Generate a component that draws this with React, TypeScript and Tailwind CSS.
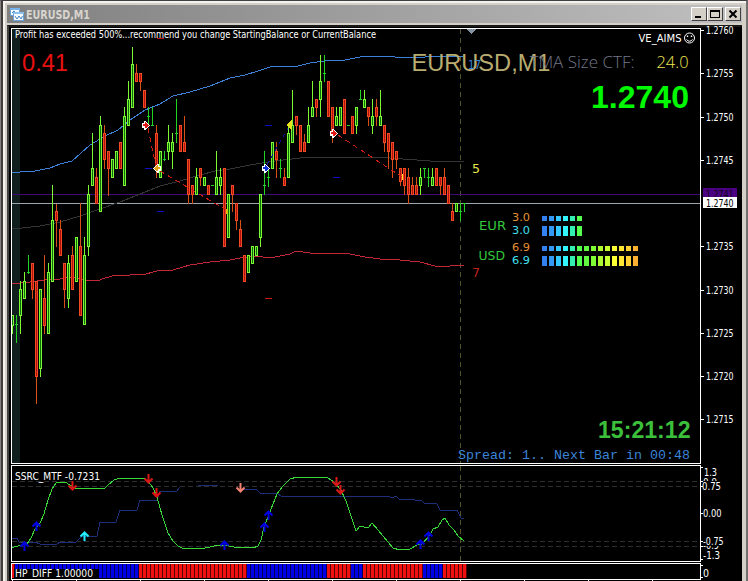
import React from 'react';

type Kind = 'g' | 'r' | 'd';
// kind, high, body top, body bottom, low. Dojis use body top as the tick level.
type Candle = [Kind, number, number, number, number];

const STEP = 4;
const FIRST_X = 12;

const CANDLES: Candle[] = [
  ['g', 315, 315, 325, 333], ['d', 315, 324, 324, 342], ['g', 281, 289, 315, 333], ['g', 272, 281, 298, 298],
  ['d', 255, 272, 272, 273], ['r', 263, 263, 289, 298], ['r', 281, 281, 376, 403], ['g', 289, 289, 368, 376],
  ['r', 255, 298, 325, 333], ['g', 263, 272, 333, 333], ['g', 185, 220, 281, 281], ['r', 204, 211, 220, 246],
  ['r', 220, 229, 255, 255], ['r', 263, 263, 289, 307], ['g', 255, 263, 298, 307], ['r', 246, 255, 289, 289],
  ['g', 237, 237, 281, 281], ['r', 203, 246, 315, 315], ['g', 237, 255, 324, 324], ['g', 185, 194, 246, 255],
  ['g', 133, 168, 185, 185], ['r', 168, 177, 203, 203], ['g', 116, 125, 211, 211], ['r', 125, 133, 159, 168],
  ['r', 151, 151, 168, 195], ['g', 159, 159, 177, 177], ['g', 151, 151, 168, 168], ['r', 142, 142, 168, 168],
  ['g', 107, 116, 185, 185], ['g', 81, 99, 125, 125], ['g', 47, 64, 107, 107], ['r', 64, 73, 81, 81],
  ['r', 73, 73, 81, 90], ['r', 90, 90, 107, 107], ['d', 107, 116, 116, 125], ['d', 107, 125, 125, 125],
  ['r', 125, 133, 168, 177], ['g', 151, 151, 177, 177], ['d', 151, 159, 159, 160], ['g', 125, 142, 151, 159],
  ['g', 133, 142, 151, 168], ['d', 99, 133, 133, 142], ['r', 125, 125, 151, 151], ['r', 116, 142, 151, 151],
  ['r', 159, 159, 194, 203], ['r', 185, 185, 194, 203], ['g', 168, 177, 194, 194], ['r', 168, 168, 177, 185],
  ['g', 177, 177, 185, 185], ['r', 185, 185, 194, 194], ['d', 185, 185, 185, 185], ['g', 151, 177, 194, 194],
  ['g', 168, 177, 185, 194], ['r', 168, 168, 246, 246], ['g', 194, 194, 237, 237], ['r', 185, 185, 194, 211],
  ['r', 203, 203, 220, 229], ['r', 220, 229, 246, 246], ['r', 255, 255, 281, 281], ['g', 255, 255, 272, 272],
  ['g', 246, 246, 263, 263], ['g', 246, 246, 255, 255], ['g', 194, 194, 237, 246], ['d', 151, 185, 185, 194],
  ['d', 168, 177, 177, 186], ['g', 142, 142, 168, 168], ['r', 142, 151, 159, 177], ['d', 159, 168, 168, 177],
  ['r', 168, 177, 185, 185], ['g', 125, 133, 177, 177], ['g', 90, 125, 142, 142], ['r', 116, 116, 125, 134],
  ['r', 125, 125, 151, 151], ['r', 134, 142, 151, 151], ['g', 107, 125, 142, 142], ['g', 81, 107, 116, 116],
  ['r', 99, 99, 107, 116], ['g', 55, 81, 99, 116], ['d', 55, 73, 73, 81], ['r', 81, 81, 116, 116],
  ['r', 107, 107, 133, 142], ['g', 107, 116, 125, 125], ['g', 107, 107, 125, 125], ['r', 99, 99, 133, 133],
  ['d', 125, 125, 125, 125], ['r', 116, 116, 133, 133], ['g', 107, 107, 125, 133], ['d', 90, 99, 99, 99],
  ['g', 90, 99, 107, 107], ['r', 107, 107, 116, 125], ['g', 99, 116, 125, 133], ['r', 99, 107, 116, 125],
  ['g', 90, 116, 125, 125], ['r', 125, 125, 142, 151], ['r', 133, 133, 151, 168], ['r', 142, 142, 159, 177],
  ['r', 151, 151, 159, 168], ['r', 168, 168, 181, 185], ['r', 168, 168, 185, 194], ['r', 168, 177, 194, 203],
  ['r', 177, 185, 194, 194], ['r', 177, 185, 194, 194], ['g', 168, 177, 185, 194], ['d', 168, 168, 168, 177],
  ['d', 168, 177, 177, 186], ['g', 168, 177, 185, 185], ['r', 168, 168, 185, 185], ['r', 177, 177, 185, 194],
  ['r', 168, 177, 194, 194], ['r', 185, 185, 203, 203], ['r', 203, 211, 220, 220], ['g', 203, 203, 211, 211],
  ['d', 203, 211, 211, 220], ['d', 203, 203, 203, 211],
];

const UPPER_BAND =
  '12,173 20,172 35,171 50,168 60,164 72,161 90,145 105,136 118,130 130,120 145,110 160,104 173,96 190,92 210,86 225,80 230,78 245,75 258,71 270,67 298,66 310,63 325,61 345,60 360,57 375,56 395,57 425,57 435,56 455,56 464,57';
const MIDDLE_BAND =
  '12,229 22,228 40,226 60,222 80,216 100,209 120,202 140,194 160,186 180,181 200,175 215,171 230,169 250,165 275,161 300,158 330,157 360,157 390,158 430,161 464,161';
const LOWER_BAND =
  '12,284 30,282 45,280 60,279 72,277 85,280 97,281 105,278 116,275 125,276 135,274 142,275 157,271 173,270 190,265 210,262 230,260 240,258 255,256 270,258 280,256 290,254 296,251 310,253 320,253 335,254 345,253 365,257 380,259 400,260 420,262 435,266 450,266 464,265';

const SSRC_FAST =
  '12,547 14,547 22,545 27,544 31,538 35,529 40,523 44,514 48,500 52,489 56,483 60,482 65,482 70,485 75,488 80,489 85,488 105,488 108,485 114,480 120,478 143,478 148,481 153,488 157,497 162,515 168,533 173,541 178,546 182,548 205,548 210,547 218,545 224,545 234,547 250,547 253,548 258,546 261,540 264,527 268,517 273,504 277,494 282,487 290,479 297,477 328,478 334,482 341,490 346,501 350,513 356,531 360,526 368,528 372,523 378,530 388,542 393,548 400,550 410,549 417,545 422,544 430,535 433,529 438,527 442,520 445,518 449,525 454,530 458,536 464,541';
const SSRC_SLOW = [
  '12,538 17,538 19,542 35,542 40,544 57,544 60,542 76,542 82,536 97,536 100,522 116,522 120,510 137,510 140,500 157,500 160,491 177,491 180,487',
  '198,485 218,485',
  '240,489 256,489 260,493 277,493 281,496 388,496 392,498 396,496 400,500 408,499 422,501 424,503 437,504 440,510 457,510 461,518 464,518',
];

const ARROWS: [number, number, string, boolean][] = [
  [24, 546, '#0000e0', true],
  [36, 526, '#0000e0', true],
  [84, 536, '#20f0ff', true],
  [224, 545, '#0000e0', true],
  [264, 527, '#0000e0', true],
  [268, 515, '#0000e0', true],
  [420, 544, '#0000e0', true],
  [428, 536, '#0000e0', true],
  [72, 486, '#d81818', false],
  [148, 479, '#d81818', false],
  [156, 493, '#e01010', false],
  [240, 488, '#f08070', false],
  [336, 482, '#d81818', false],
  [340, 490, '#d81818', false],
];

const METER = [
  '#3380f0', '#3399f5', '#33c8ff', '#33f5ff', '#33f0b0', '#55ff50', '#60f840',
  '#80ff33', '#acf833', '#c8ff33', '#ffff33', '#ffe633', '#ffd033', '#ffb033',
];

const PRICES = ['1.2760', '1.2755', '1.2750', '1.2745', '', '1.2735', '1.2730', '1.2725', '1.2720', '1.2715'];

const histColor = (x: number) => {
  const red =
    x < 14 || (x > 138 && x < 246) || (x > 326 && x < 350) || (x > 362 && x < 422) || x > 442;
  return red ? '#f01010' : '#0000e8';
};

const TAHOMA = "'DejaVu Sans Condensed', 'DejaVu Sans', sans-serif";
const LIGHT = "'Open Sans', 'Noto Sans', sans-serif";
const VERDANA = "'DejaVu Sans', sans-serif";
const ARIAL = "'Liberation Sans', Arial, sans-serif";

interface LabelProps {
  x: number;
  y: number;
  w: number;
  size?: number;
  fill?: string;
  font?: string;
  weight?: number;
  children: string;
}

const Label = ({ x, y, w, size = 11, fill = '#fff', font = TAHOMA, weight = 400, children }: LabelProps) => (
  <text
    x={x}
    y={y}
    textLength={w}
    lengthAdjust="spacingAndGlyphs"
    fontSize={size}
    fontFamily={font}
    fontWeight={weight}
    fill={fill}
  >
    {children}
  </text>
);

const CandleBar = ({ x, c }: { x: number; c: Candle }) => {
  const [kind, high, top, bottom, low] = c;
  if (kind === 'd') {
    return (
      <g fill="#22d422">
        <rect x={x} y={high} width={1} height={Math.max(1, low - high + 1)} />
        <rect x={x - 1} y={top} width={3} height={1} />
      </g>
    );
  }
  const edge = kind === 'g' ? '#7cf932' : '#f44a20';
  return (
    <g>
      <rect x={x} y={high} width={1} height={low - high + 1} fill={kind === 'g' ? '#7cf932' : '#d85018'} />
      <rect x={x - 1} y={top} width={3} height={bottom - top + 1} fill={edge} />
      <rect x={x} y={top + 1} width={1} height={bottom - top - 1} fill={kind === 'g' ? '#0a6c0a' : '#b01010'} />
    </g>
  );
};

// Order marker: a diamond whose flat side faces the bar it was opened on
const Marker = ({ x, y, fill, flip = false }: { x: number; y: number; fill: string; flip?: boolean }) => (
  <g transform={`translate(${x} ${y}) scale(${flip ? -1 : 1} 1)`}>
    <path
      d="M-4 -2h2v-2h2v1h1v1h1v1h1v1h1v1h-1v1h-1v1h-1v1h-1v1h-2v-2h-2z"
      fill="#fff"
    />
    <path d="M-3 -1h2v-2h1v1h1v1h1v1h1v1h-1v1h-1v1h-2v-2h-2z" fill={fill} />
  </g>
);

const Meter = ({ x, y, h, n }: { x: number; y: number; h: number; n: number }) => (
  <g>
    {METER.slice(0, n).map((color, i) => (
      <rect key={i} x={x + i * 7} y={y} width={5} height={h} fill={color} />
    ))}
  </g>
);

const MainPlot = () => (
  <svg className="block shrink-0" width={688} height={434} viewBox="12 29 688 434">
    <g shapeRendering="crispEdges">
      <rect x={12} y={29} width={8} height={434} fill="#101e1e" />
      <line x1={460.5} y1={29} x2={460.5} y2={463} stroke="#55552a" strokeDasharray="5 4" />
      <rect x={12} y={194} width={688} height={1} fill="#3f0a74" />
      <rect x={12} y={203} width={688} height={1} fill="#9ca4ae" />
      <g fill="none" strokeWidth={1}>
        <polyline points={MIDDLE_BAND} stroke="#343434" />
        <polyline points={UPPER_BAND} stroke="#3c80d8" />
        <polyline points={LOWER_BAND} stroke="#c02838" />
      </g>
      {CANDLES.map((c, i) => (
        <CandleBar key={i} x={FIRST_X + i * STEP} c={c} />
      ))}
      <g fill="#1010c8">
        <rect x={145} y={168} width={7} height={1} />
        <rect x={157} y={211} width={7} height={1} />
        <rect x={265} y={125} width={7} height={1} />
        <rect x={333} y={177} width={7} height={1} />
      </g>
      <rect x={157} y={38} width={7} height={1} fill="#b01414" />
      <rect x={265} y={298} width={7} height={1} fill="#d01818" />
      <g fill="none" stroke="#d01c10" strokeDasharray="5 4">
        <path d="M148 128L156 167" />
        <path d="M160 171L228 211" />
        <path d="M338 135L402 177" />
      </g>
      <path d="M267 165L288 128" stroke="#0c0ca0" strokeDasharray="4 4" />
      <path d="M286.5 125L292 120V130z" fill="#e8e020" />
      <path d="M402 174h1v6h-1z" fill="#ffe030" />
      <path d="M226 209h2v5h-2z" fill="#d8c010" />
      <path d="M467 29h9v1h-1v1h-1v1h-1v1h-1v1h-1v-1h-1v-1h-1v-1h-1v-1h-1z" fill="#8492a0" />
      <Marker x={146} y={125} fill="#e01818" />
      <Marker x={157} y={168} fill="#e0a018" flip />
      <Marker x={266} y={168} fill="#1030e0" />
      <Marker x={334} y={133} fill="#e01818" />
    </g>

    <Label x={15} y={38} w={361}>
      Profit has exceeded 500%...recommend you change StartingBalance or CurrentBalance
    </Label>
    <Label x={22} y={71} w={46} size={24} fill="#e81010" font={ARIAL}>0.41</Label>
    <Label x={638.5} y={41.5} w={43}>VE_AIMS</Label>
    <g fill="none" stroke="#fff" strokeWidth={1}>
      <circle cx={689.5} cy={38} r={5} />
      <path d="M686.5 39.5q3 3.5 6 0" />
      <path d="M687.5 35.5v1.5M691.5 35.5v1.5" strokeWidth={1.4} />
    </g>

    <Label x={411.5} y={71} w={139} size={24} fill="#b8ac70" font={ARIAL}>EURUSD,M1</Label>
    <Label x={468} y={69} w={13} size={13} fill="#3c84d8" font={VERDANA}>17</Label>
    <Label x={529.5} y={68} w={105} size={16} fill="#727688" font={LIGHT} weight={300}>TMA Size CTF:</Label>
    <Label x={656.5} y={68} w={32} size={16} fill="#f0e850" font={LIGHT} weight={300}>24.0</Label>
    <Label x={591} y={108} w={98} size={32} fill="#00f800" font={ARIAL} weight={700}>1.2740</Label>

    <Label x={472} y={173} w={8} size={13} fill="#e8e848" font={VERDANA}>5</Label>
    <Label x={472} y={277} w={8} size={13} fill="#c02018" font={VERDANA}>7</Label>

    <Label x={479} y={230} w={27} size={12.5} fill="#34c83c" font={VERDANA}>EUR</Label>
    <Label x={478.5} y={260} w={26.5} size={12.5} fill="#34c83c" font={VERDANA}>USD</Label>
    <Label x={512} y={221} w={18} size={11} fill="#e89030" font={VERDANA}>3.0</Label>
    <Label x={512} y={234} w={18} size={11} fill="#40e0f0" font={VERDANA}>3.0</Label>
    <Label x={512} y={251} w={18} size={11} fill="#e89030" font={VERDANA}>6.9</Label>
    <Label x={512} y={264} w={18} size={11} fill="#40e0f0" font={VERDANA}>6.9</Label>
    <Meter x={542} y={216} h={5} n={6} />
    <Meter x={542} y={226} h={10} n={6} />
    <Meter x={542} y={246} h={5} n={14} />
    <Meter x={542} y={256} h={10} n={14} />

    <Label x={598} y={438} w={92.5} size={24} fill="#3cc03c" font={ARIAL} weight={700}>15:21:12</Label>
    <Label x={458} y={459} w={232} size={13.33} fill="#3c84d8" font="'Liberation Mono', monospace">
      Spread: 1.. Next Bar in 00:48
    </Label>
  </svg>
);

const PriceAxis = () => (
  <svg className="block shrink-0 overflow-visible" width={40} height={436} viewBox="701 28 40 436">
    {PRICES.map((price, i) => {
      if (!price) return null;
      const y = Math.round(30 + i * 43.25);
      return (
        <g key={price}>
          <rect x={701} y={y} width={3} height={1} fill="#fff" />
          <Label x={706} y={y + 4} w={27.5}>{price}</Label>
        </g>
      );
    })}
    <rect x={703} y={188} width={34} height={10} fill="#4b0082" />
    <Label x={706} y={198} w={27.5} fill="#100018">1.2741</Label>
    <rect x={703} y={197} width={34} height={11} fill="#fff" />
    <Label x={706} y={207} w={27.5} fill="#000">1.2740</Label>
  </svg>
);

const SsrcPlot = () => (
  <svg className="block shrink-0" width={688} height={95} viewBox="12 466 688 95">
    <g shapeRendering="crispEdges" fill="none">
      {[481, 486, 541, 546].map((y) => (
        <path key={y} d={`M12 ${y}.5H700`} stroke="#2e2e2e" strokeDasharray="5 3" />
      ))}
      <path d="M460.5 466V561" stroke="#55552a" strokeDasharray="5 4" />
      {SSRC_SLOW.map((points) => (
        <polyline key={points} points={points} stroke="#1c2f78" />
      ))}
      <polyline points={SSRC_FAST} stroke="#38d838" />
    </g>
    {ARROWS.map(([x, y, color, up]) => (
      <path
        key={`${x}-${y}`}
        transform={`translate(${x + 0.5} ${y}) scale(1 ${up ? 1 : -1})`}
        d="M0 5V-4M-4 0.5L0-3.5L4 0.5"
        fill="none"
        stroke={color}
        strokeWidth={2}
      />
    ))}
    <Label x={15} y={479.5} w={85}>SSRC_MTF -0.7231</Label>
  </svg>
);

const SsrcAxis = () => (
  <svg className="block shrink-0" width={40} height={97} viewBox="701 465 40 97">
    {[467, 481, 486, 513, 541, 546, 559].map((y) => (
      <rect key={y} x={701} y={y} width={2} height={1} fill="#fff" />
    ))}
    <Label x={703} y={486} w={14}>0.9</Label>
    <rect x={703} y={467} width={30} height={10} fill="#000" />
    <Label x={704} y={476} w={13}>1.3</Label>
    <rect x={703} y={481} width={20} height={9} fill="#000" />
    <Label x={702} y={490} w={19}>0.75</Label>
    <Label x={703} y={517} w={18.5}>0.00</Label>
    <Label x={703} y={549} w={16}>-0.9</Label>
    <rect x={703} y={537} width={22} height={9} fill="#000" />
    <Label x={703} y={545} w={20.5}>-0.75</Label>
    <Label x={703} y={558.5} w={17}>-1.3</Label>
  </svg>
);

const HistPlot = () => (
  <svg className="block shrink-0" width={688} height={15} viewBox="12 564 688 15">
    <g shapeRendering="crispEdges">
      {CANDLES.map((_, i) => {
        const x = FIRST_X + i * STEP;
        return (
          <g key={i} fill={histColor(x)}>
            <rect x={x - 1} y={564} width={3} height={14} />
            <rect x={x + 2} y={564} width={1} height={14} opacity={0.35} />
          </g>
        );
      })}
      <rect x={14} y={569} width={85} height={9} fill="#000" />
    </g>
    <Label x={15} y={577} w={78}>HP_DIFF 1.00000</Label>
  </svg>
);

const HistAxis = () => (
  <svg className="block shrink-0" width={40} height={17} viewBox="701 563 40 17">
    <path d="M701 565.5h2M701 577.5h2" stroke="#fff" />
    <Label x={703} y={577} w={6}>0</Label>
  </svg>
);

const WindowButton = ({ children }: { children: React.ReactNode }) => (
  <button className="flex h-[14px] w-4 items-center justify-center border border-t-white border-l-white border-r-[#404040] border-b-[#404040] bg-[#d4d0c8]">
    <svg width={12} height={10} viewBox="0 0 12 10" shapeRendering="crispEdges" fill="none" stroke="#000">
      {children}
    </svg>
  </button>
);

const TitleBar = () => (
  <header className="flex h-[18px] shrink-0 items-center bg-gradient-to-r from-[#808080] to-[#c0c0c0] pr-px pl-[3px]">
    <svg width={14} height={13} viewBox="0 0 14 13" className="mr-[2px]">
      <rect x={0.5} y={0.5} width={9} height={7} fill="#f4faff" stroke="#68a0d8" />
      <rect x={0} y={0} width={10} height={2} fill="#78b4ec" />
      <path d="M2 5l2-2 2 3 2-2" fill="none" stroke="#4080c0" />
      <rect x={3.5} y={4.5} width={10} height={8} fill="#f8fcff" stroke="#68a0d8" />
      <rect x={3} y={4} width={11} height={2} fill="#88c0f0" />
      <path d="M5 8l2 3 2-3 2 3 1.5-3" fill="none" stroke="#4080c0" />
    </svg>
    <svg width={66} height={18} viewBox="0 0 66 18">
      <Label x={0} y={14} w={64} size={11.5} fill="#d8d5ce" weight={700}>EURUSD,M1</Label>
    </svg>
    <div className="ml-auto flex items-center">
      <WindowButton>
        <path d="M2 7.5h6M2 8.5h6" />
      </WindowButton>
      <WindowButton>
        <path d="M1.5 1.5h9v7h-9zM1 2.5h10" />
      </WindowButton>
      <div className="ml-[2px] flex">
        <WindowButton>
          <path d="M2.5 1.5l7 7M9.5 1.5l-7 7" strokeWidth={2} shapeRendering="auto" />
        </WindowButton>
      </div>
    </div>
  </header>
);

export default function App() {
  return (
    <div className="flex h-[581px] w-[748px] overflow-hidden border-t border-r-2 border-l border-t-[#404040] border-r-[#707070] border-l-[#808080] bg-[#d4d0c8]">
      <div className="w-[2px] shrink-0 bg-[#403c3c]" />
      <div className="w-[2px] shrink-0 bg-[#f4f2ee]" />
      <div className="flex min-w-0 flex-1 flex-col border-t-2 border-t-[#f4f2ee] pt-[2px] pl-[2px]">
        <div className="flex min-h-0 w-[735px] flex-1 flex-col">
          <TitleBar />
          <div className="h-[2px] shrink-0 bg-[#d4d0c8]" />
          <main className="flex flex-1 flex-col border-t-2 border-l-2 border-t-[#181818] border-l-[#404040] bg-black pt-px pl-[2px]">
            <section className="flex shrink-0">
              <div className="border border-white">
                <MainPlot />
              </div>
              <PriceAxis />
            </section>
            <section className="mt-px flex shrink-0">
              <div className="border border-white">
                <SsrcPlot />
              </div>
              <SsrcAxis />
            </section>
            <section className="mt-px flex shrink-0">
              <div className="border border-white">
                <HistPlot />
              </div>
              <HistAxis />
            </section>
            <svg className="block shrink-0" width={690} height={1} viewBox="11 580 690 1">
              {Array.from({ length: 11 }, (_, i) => (
                <rect key={i} x={12 + i * 64} y={580} width={1} height={1} fill="#fff" />
              ))}
            </svg>
          </main>
        </div>
      </div>
    </div>
  );
}
